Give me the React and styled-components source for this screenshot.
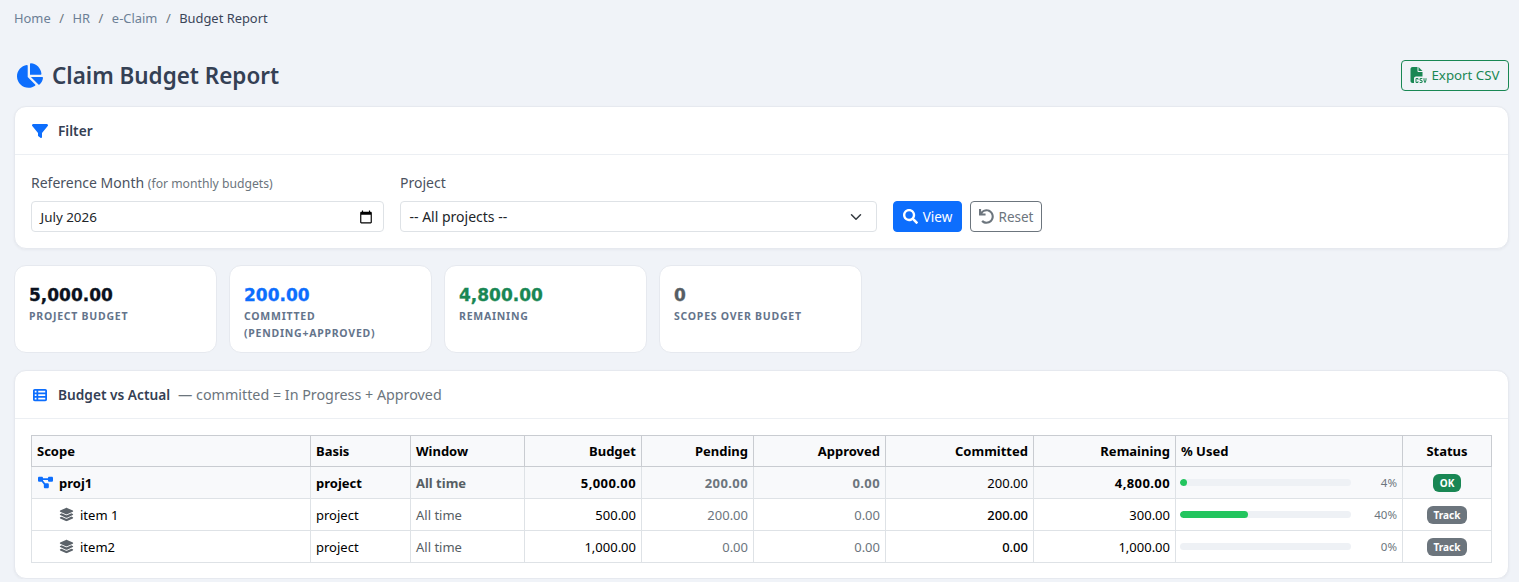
import React from "react";
import styled, { createGlobalStyle } from "styled-components";
import { FaChartPie, FaSearch, FaUndo } from "react-icons/fa";
import {
  FaDiagramProject,
  FaFileCsv,
  FaFilter,
  FaLayerGroup,
  FaTableList,
} from "react-icons/fa6";

const GlobalStyle = createGlobalStyle`
  html, body {
    margin: 0;
    background: #f0f3f8;
    font-family: "Noto Sans", "Open Sans", sans-serif;
    color: #212529;
  }
  * { box-sizing: border-box; }
`;

const Page = styled.div`
  padding: 8px 10px 0 14px;
`;

const Breadcrumb = styled.nav`
  display: flex;
  align-items: center;
  height: 20px;
  font-size: 12.9px;
  color: #6c7f96;
`;

const Crumb = styled.span`
  color: ${(p) => (p.$active ? "#3b4558" : "#6c7f96")};
`;

const Sep = styled.span`
  padding: 0 8.5px;
  color: #6c757d;
`;

const TitleRow = styled.div`
  display: flex;
  align-items: center;
  justify-content: space-between;
  margin-top: 25px;
  height: 44px;
  margin-bottom: 9px;
`;

const Title = styled.h1`
  margin: 0;
  display: flex;
  align-items: center;
  gap: 9px;
  padding-left: 3px;
  font-size: 22.45px;
  font-weight: 600;
  color: #344054;
  svg { color: #0d6efd; width: 26px; height: 25px; }
`;

const ExportButton = styled.button`
  display: flex;
  align-items: center;
  gap: 4px;
  height: 31px;
  width: 108px;
  justify-content: center;
  background: transparent;
  border: 1px solid #198754;
  border-radius: 4px;
  color: #198754;
  font: inherit;
  font-size: 13.3px;
  padding: 0;
  svg { width: 17px; height: 16px; }
`;

const Card = styled.section`
  background: #fff;
  border: 1px solid #e6e9ef;
  border-radius: 12px;
  box-shadow: 0 1px 3px rgba(30, 41, 59, 0.05);
`;

const CardHeader = styled.header`
  display: flex;
  align-items: center;
  height: 48px;
  padding: 0 17px;
  border-bottom: 1px solid #eceff3;
  font-size: 13.7px;
  font-weight: 600;
  color: #344054;
  svg { color: #0d6efd; width: 16px; height: 16px; margin-right: 10px; }
`;

const TableIcon = styled(FaTableList)`
  && { width: 14px; height: 14px; margin: 0 11px 0 1px; }
`;

const HeaderNote = styled.span`
  font-weight: 400;
  color: #6c757d;
  font-size: 14.3px;
  margin-left: 8px;
`;

const FilterBody = styled.div`
  display: flex;
  align-items: flex-end;
  padding: 16px;
  height: 93px;
`;

const Field = styled.div`
  display: flex;
  flex-direction: column;
  width: ${(p) => p.$w}px;
  margin-right: 16px;
`;

const Label = styled.div`
  font-size: 14px;
  color: #4a5260;
  height: 24px;
  margin-bottom: 6px;
  line-height: 24px;
`;

const Hint = styled.small`
  font-size: 12.2px;
  color: #6c757d;
`;

const FieldBox = styled.div`
  display: flex;
  align-items: center;
  justify-content: space-between;
  height: 31px;
  width: 100%;
  border: 1px solid #dee2e6;
  border-radius: 4px;
  padding: 0 ${(p) => p.$right}px 0 8.5px;
  font-size: ${(p) => p.$size}px;
  color: #212529;
  background: #fff;
`;

const Button = styled.button`
  display: flex;
  align-items: center;
  justify-content: center;
  gap: 5px;
  height: 31px;
  width: ${(p) => p.$w}px;
  margin-right: 8px;
  border-radius: 4px;
  font: inherit;
  font-size: 13.5px;
  padding: 0;
  background: ${(p) => (p.$primary ? "#0d6efd" : "#fff")};
  color: ${(p) => (p.$primary ? "#fff" : "#6c757d")};
  border: 1px solid ${(p) => (p.$primary ? "#0d6efd" : "#6c757d")};
  svg { width: 15px; height: 15px; }
`;

const StatGrid = styled.div`
  display: grid;
  grid-template-columns: repeat(4, 203px);
  column-gap: 12px;
  margin: 16px 0 17px;
`;

const Stat = styled.div`
  height: 88px;
  background: #fff;
  border: 1px solid #e6e9ef;
  border-radius: 12px;
  padding: 16px 14px;
`;

const StatValue = styled.div`
  font-family: "DejaVu Sans", sans-serif;
  font-size: 17px;
  font-weight: 700;
  line-height: 26px;
  -webkit-text-stroke: 0.3px ${(p) => p.$color};
  color: ${(p) => p.$color};
`;

const StatLabel = styled.div`
  font-size: 10.5px;
  font-weight: 700;
  letter-spacing: 0.75px;
  line-height: 17px;
  text-transform: uppercase;
  color: #64748b;
`;

const TableWrap = styled.div`
  padding: 16px 16px 15px;
`;

const Table = styled.table`
  border-collapse: collapse;
  table-layout: fixed;
  width: 1460px;
  font-size: 13px;
`;

const HeadCell = styled.th`
  height: 31px;
  padding: 0 5px;
  background: #f8f9fb;
  border: 1px solid #c9ccd1;
  color: #000;
  font-weight: 700;
  font-size: 13px;
  text-align: ${(p) => p.$align || "left"};
`;

const Cell = styled.td`
  height: 32px;
  padding: 0 5px;
  border: 1px solid #dee2e6;
  text-align: ${(p) => p.$align || "left"};
  color: ${(p) => p.$color || "#212529"};
  font-weight: ${(p) => p.$weight || 400};
  letter-spacing: ${(p) => (p.$weight === 700 && p.$align === "right" ? "0.4px" : "normal")};
  background: ${(p) => (p.$group ? "#f8f9fb" : "#fff")};
`;

const BarCell = styled(Cell)`
  padding-left: 4px;
`;

const ScopeName = styled.div`
  display: flex;
  align-items: center;
  gap: 6px;
  padding-left: ${(p) => (p.$child ? 22 : 1)}px;
  svg {
    width: 15px;
    height: 15px;
    color: ${(p) => (p.$child ? "#5c636a" : "#0d6efd")};
  }
`;

const UsedRow = styled.div`
  display: flex;
  align-items: center;
  justify-content: space-between;
`;

const Track = styled.div`
  width: 171px;
  height: 7px;
  border-radius: 4px;
  background: #eef1f5;
  overflow: hidden;
`;

const Fill = styled.div`
  height: 100%;
  border-radius: 4px;
  background: #22c55e;
`;

const Percent = styled.span`
  font-size: 11.5px;
  color: #6c757d;
  font-weight: 400;
`;

const Badge = styled.span`
  display: inline-block;
  padding: 0 7px;
  height: 18px;
  line-height: 18px;
  border-radius: 6px;
  font-size: 10px;
  font-weight: 700;
  color: #fff;
  background: ${(p) => p.$bg};
`;

const columns = [
  ["Scope", 279],
  ["Basis", 100],
  ["Window", 114],
  ["Budget", 117, "right"],
  ["Pending", 112, "right"],
  ["Approved", 132, "right"],
  ["Committed", 148, "right"],
  ["Remaining", 142, "right"],
  ["% Used", 227],
  ["Status", 89, "center"],
];

const rows = [
  { name: "proj1", group: true, budget: "5,000.00", pending: "200.00", approved: "0.00", committed: "200.00", remaining: "4,800.00", used: 4, status: "OK" },
  { name: "item 1", budget: "500.00", pending: "200.00", approved: "0.00", committed: "200.00", remaining: "300.00", used: 40, status: "Track" },
  { name: "item2", budget: "1,000.00", pending: "0.00", approved: "0.00", committed: "0.00", remaining: "1,000.00", used: 0, status: "Track" },
];

const Chevron = () => (
  <svg width="12" height="12" viewBox="0 0 16 16" fill="none" stroke="#343a40" strokeWidth="2" strokeLinecap="round" strokeLinejoin="round">
    <path d="m2 5 6 6 6-6" />
  </svg>
);

const CalendarIcon = () => (
  <svg width="14" height="14" viewBox="0 0 24 24" fill="#000">
    <path d="M20 3h-1V1h-2v2H7V1H5v2H4c-1.1 0-2 .9-2 2v16c0 1.1.9 2 2 2h16c1.1 0 2-.9 2-2V5c0-1.1-.9-2-2-2zm0 18H4V8h16v13z" />
  </svg>
);

export default function App() {
  return (
    <Page>
      <GlobalStyle />
      <Breadcrumb>
        <Crumb>Home</Crumb>
        <Sep>/</Sep>
        <Crumb>HR</Crumb>
        <Sep>/</Sep>
        <Crumb>e-Claim</Crumb>
        <Sep>/</Sep>
        <Crumb $active>Budget Report</Crumb>
      </Breadcrumb>

      <TitleRow>
        <Title>
          <FaChartPie />
          Claim Budget Report
        </Title>
        <ExportButton>
          <FaFileCsv />
          Export CSV
        </ExportButton>
      </TitleRow>

      <Card>
        <CardHeader>
          <FaFilter />
          Filter
        </CardHeader>
        <FilterBody>
          <Field $w={353}>
            <Label>
              Reference Month <Hint>(for monthly budgets)</Hint>
            </Label>
            <FieldBox $right={10} $size={13.4}>
              July 2026
              <CalendarIcon />
            </FieldBox>
          </Field>
          <Field $w={477}>
            <Label>Project</Label>
            <FieldBox $right={14} $size={14}>
              -- All projects --
              <Chevron />
            </FieldBox>
          </Field>
          <Button $primary $w={69}>
            <FaSearch />
            View
          </Button>
          <Button $w={72}>
            <FaUndo />
            Reset
          </Button>
        </FilterBody>
      </Card>

      <StatGrid>
        <Stat>
          <StatValue $color="#0b1220">5,000.00</StatValue>
          <StatLabel>Project Budget</StatLabel>
        </Stat>
        <Stat>
          <StatValue $color="#0d6efd">200.00</StatValue>
          <StatLabel>
            Committed
            <br />
            (Pending+Approved)
          </StatLabel>
        </Stat>
        <Stat>
          <StatValue $color="#198754">4,800.00</StatValue>
          <StatLabel>Remaining</StatLabel>
        </Stat>
        <Stat>
          <StatValue $color="#565e64">0</StatValue>
          <StatLabel>Scopes Over Budget</StatLabel>
        </Stat>
      </StatGrid>

      <Card>
        <CardHeader>
          <TableIcon />
          Budget vs Actual
          <HeaderNote>— committed = In Progress + Approved</HeaderNote>
        </CardHeader>
        <TableWrap>
          <Table>
            <colgroup>
              {columns.map(([label, width]) => (
                <col key={label} width={width} />
              ))}
            </colgroup>
            <thead>
              <tr>
                {columns.map(([label, , align]) => (
                  <HeadCell key={label} $align={align}>
                    {label}
                  </HeadCell>
                ))}
              </tr>
            </thead>
            <tbody>
              {rows.map((row) => {
                const weight = row.group ? 700 : 400;
                return (
                  <tr key={row.name}>
                    <Cell $group={row.group} $weight={weight} $color="#000">
                      <ScopeName $child={!row.group}>
                        {row.group ? <FaDiagramProject /> : <FaLayerGroup />}
                        {row.name}
                      </ScopeName>
                    </Cell>
                    <Cell $group={row.group} $weight={weight} $color="#000">project</Cell>
                    <Cell $group={row.group} $weight={weight} $color="#565e64">All time</Cell>
                    <Cell $group={row.group} $weight={weight} $align="right" $color="#000">{row.budget}</Cell>
                    <Cell $group={row.group} $weight={weight} $align="right" $color="#6c757d">{row.pending}</Cell>
                    <Cell $group={row.group} $weight={weight} $align="right" $color="#6c757d">{row.approved}</Cell>
                    <Cell $group={row.group} $weight={row.group ? 400 : 500} $align="right" $color="#000">{row.committed}</Cell>
                    <Cell $group={row.group} $weight={weight} $align="right" $color="#000">{row.remaining}</Cell>
                    <BarCell $group={row.group}>
                      <UsedRow>
                        <Track>
                          <Fill style={{ width: `${row.used}%` }} />
                        </Track>
                        <Percent>{row.used}%</Percent>
                      </UsedRow>
                    </BarCell>
                    <Cell $group={row.group} $align="center">
                      <Badge $bg={row.status === "OK" ? "#198754" : "#6c757d"}>{row.status}</Badge>
                    </Cell>
                  </tr>
                );
              })}
            </tbody>
          </Table>
        </TableWrap>
      </Card>
    </Page>
  );
}
